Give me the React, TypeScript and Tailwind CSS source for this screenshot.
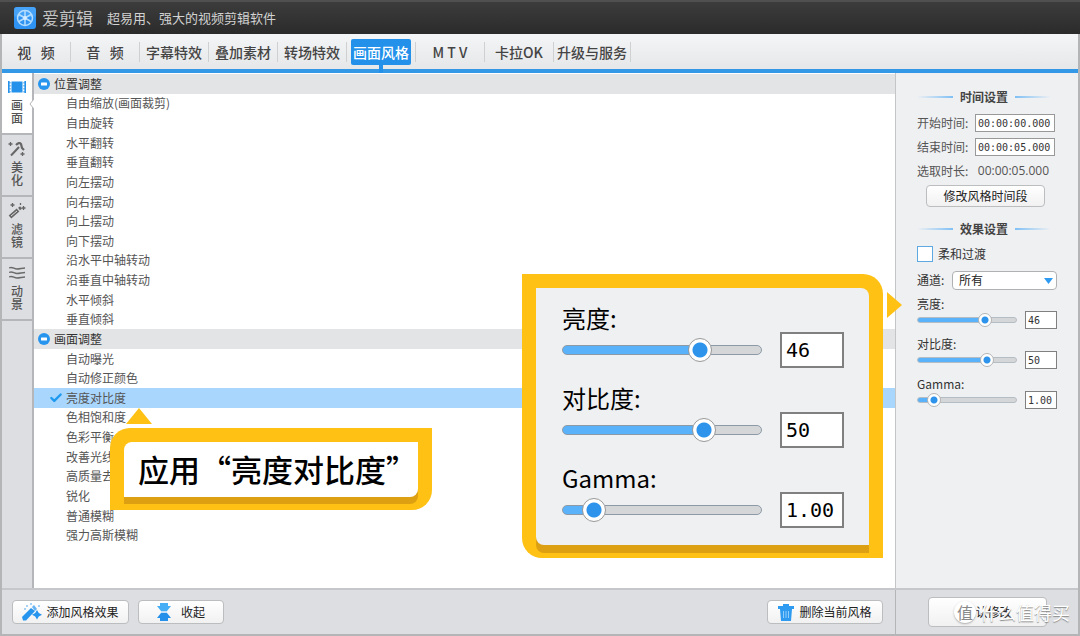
import { useState, type ReactNode } from 'react';
import clsx from 'clsx';
import { Check } from 'lucide-react';

const tabs = ['视   频', '音   频', '字幕特效', '叠加素材', '转场特效', '画面风格', 'M T V', '卡拉OK', '升级与服务'];

const groups = [
  {
    title: '位置调整',
    items: [
      '自由缩放(画面裁剪)', '自由旋转', '水平翻转', '垂直翻转', '向左摆动', '向右摆动',
      '向上摆动', '向下摆动', '沿水平中轴转动', '沿垂直中轴转动', '水平倾斜', '垂直倾斜',
    ],
  },
  {
    title: '画面调整',
    items: [
      '自动曝光', '自动修正颜色', '亮度对比度', '色相饱和度', '色彩平衡', '改善光线',
      '高质量去噪', '锐化', '普通模糊', '强力高斯模糊',
    ],
  },
];

const sliders = [
  { label: '亮度:', position: 72, value: '46' },
  { label: '对比度:', position: 74, value: '50' },
  { label: 'Gamma:', position: 11, value: '1.00' },
];

function FilmIcon() {
  return (
    <svg width="18" height="14" viewBox="0 0 18 14" fill="#2492ea" aria-hidden="true">
      <rect x="3.5" y="1.5" width="11" height="11" />
      <path d="M0 1h1.6v12H0zM16.4 1H18v12h-1.6z" />
      <path d="M1 2h2v1.5H1zM1 5h2v1.5H1zM1 8h2v1.5H1zM1 11h2v1.5H1zM15 2h2v1.5h-2zM15 5h2v1.5h-2zM15 8h2v1.5h-2zM15 11h2v1.5h-2z" opacity=".5" />
    </svg>
  );
}

function BeautyIcon() {
  return (
    <svg width="18" height="16" viewBox="0 0 18 16" fill="none" stroke="#666" aria-hidden="true">
      <path d="M3 14.5 11 6" strokeWidth="2" />
      <path d="M8 4c2-2 4-2.500 5-1l1 4 2 2" strokeWidth="2.200" />
      <path d="M2.500 1v4M.5 3h4M14.500 11v4M12.500 13h4" strokeWidth="1.300" />
    </svg>
  );
}

function FilterIcon() {
  return (
    <svg width="18" height="16" viewBox="0 0 18 16" fill="none" stroke="#666" aria-hidden="true">
      <path d="m2 14 8-7" strokeWidth="4" />
      <path d="m3 13 6-5" stroke="#ddd" strokeWidth="1" />
      <path d="m11 6 2-1.500" strokeWidth="3" />
      <path d="M4.500 0v4M2.500 2h4M15.500 3v4M13.500 5h4M12.500 0v2" strokeWidth="1.300" />
    </svg>
  );
}

function WavesIcon() {
  return (
    <svg width="16" height="14" viewBox="0 0 16 14" fill="none" stroke="#6b6b6b" strokeWidth="1.500" aria-hidden="true">
      <path d="M0 2c3-2 5 1 8 1s5-1 8-1M0 6.500c3-2 5 1 8 1s5-1 8-1M0 11c3-2 5 1 8 1s5-1 8-1" />
    </svg>
  );
}

const sideTabs = [
  { label: '画面', icon: <FilmIcon /> },
  { label: '美化', icon: <BeautyIcon /> },
  { label: '滤镜', icon: <FilterIcon /> },
  { label: '动景', icon: <WavesIcon /> },
];

function Logo() {
  return (
    <svg width="22" height="22" viewBox="0 0 22 22" aria-hidden="true">
      <rect width="22" height="22" rx="3" fill="#2f93f3" />
      <rect width="22" height="10" rx="3" fill="#5db2fb" opacity=".5" />
      <circle cx="11" cy="11" r="7.500" fill="none" stroke="#b5ddff" strokeWidth="1.500" />
      <path d="M11 4v14M5 7.500l12 7M17 7.500l-12 7" stroke="#b5ddff" strokeWidth="1.500" />
      <circle cx="11" cy="11" r="2" fill="#d5ecff" />
    </svg>
  );
}

function WandIcon() {
  return (
    <svg width="20" height="18" viewBox="0 0 20 18" fill="#2795ee" aria-hidden="true">
      <path d="M0 14 9 5l4 3-9 9.500H1z" />
      <path d="m15 7 1.800 3 3.200 1.800-3.200 1.800-1.800 3-1.800-3-3.200-1.800 3.200-1.800z" />
      <path d="M10 4l2-2 3 4-2 2z" opacity=".7" />
      <path d="M4 2h2v2H4zM8 0h2v2H8zM2 5h2v2H2zM16 2h2v2h-2z" opacity=".4" />
    </svg>
  );
}

function CollapseIcon() {
  return (
    <svg width="14" height="18" viewBox="0 0 14 18" aria-hidden="true">
      <path d="M3 0h8v3h3l-4 5H4L0 3h3z" fill="#45aef5" />
      <path d="M3 18h8v-3h3l-4-5H4l-4 5h3z" fill="#2490ea" />
      <path d="M4 8.500h6v1H4z" fill="#8cc9f5" />
    </svg>
  );
}

function TrashIcon() {
  return (
    <svg width="16" height="17" viewBox="0 0 16 17" fill="#2f9bf0" aria-hidden="true">
      <path d="M5 0h6v2h5v3H0V2h5z" />
      <path d="M2 5h12l-1 12H3z" />
      <path d="M5.500 7v7M8 7v7M10.500 7v7" stroke="#8fcdfa" />
    </svg>
  );
}

type SliderFieldProps = {
  id: string;
  label: string;
  position: number;
  value: string;
  large?: boolean;
};

function SliderField({ id, label, position, value, large }: SliderFieldProps) {
  const [pos, setPos] = useState(position);
  const fill = { '--fill': `${pos}%` } as React.CSSProperties;

  return (
    <div className={clsx('flex flex-col', large ? 'h-20' : 'h-10')}>
      <label
        htmlFor={id}
        className={clsx(large ? 'h-7 text-2xl leading-7 text-black' : 'h-3 text-xs leading-3 text-[#333]')}
      >
        {label}
      </label>
      <div className={clsx('flex items-center', large ? 'h-9 gap-[18px]' : 'h-5 gap-2')}>
        <input
          id={id}
          type="range"
          value={pos}
          onChange={(e) => setPos(Number(e.target.value))}
          style={fill}
          className={clsx(
            'appearance-none bg-transparent',
            '[&::-webkit-slider-runnable-track]:rounded-full [&::-webkit-slider-runnable-track]:border',
            '[&::-webkit-slider-runnable-track]:bg-[linear-gradient(to_right,#5ab2fa_var(--fill),#d5d6d8_var(--fill))]',
            '[&::-webkit-slider-thumb]:appearance-none [&::-webkit-slider-thumb]:rounded-full [&::-webkit-slider-thumb]:border',
            large
              ? 'h-6 w-[200px] [&::-webkit-slider-runnable-track]:h-[10px] [&::-webkit-slider-runnable-track]:border-[#8d9aa6] [&::-webkit-slider-thumb]:-mt-2 [&::-webkit-slider-thumb]:size-6 [&::-webkit-slider-thumb]:border-[#999] [&::-webkit-slider-thumb]:bg-[radial-gradient(circle,#2e93ea_7px,#fff_8px)]'
              : 'h-[14px] w-[100px] [&::-webkit-slider-runnable-track]:h-[6px] [&::-webkit-slider-runnable-track]:border-[#b4bcc4] [&::-webkit-slider-thumb]:-mt-[5px] [&::-webkit-slider-thumb]:size-[14px] [&::-webkit-slider-thumb]:border-[#b5b5b5] [&::-webkit-slider-thumb]:bg-[radial-gradient(circle,#2e93ea_3px,#fff_4px)]'
          )}
        />
        <input
          type="text"
          aria-label={label}
          defaultValue={value}
          className={clsx(
            'border-[#808080] bg-white font-["DejaVu_Sans_Mono",monospace]',
            large ? 'h-9 w-16 border-2 px-1 text-xl text-black' : 'h-[18px] w-8 border px-[2px] text-[10px] text-[#333]'
          )}
        />
      </div>
    </div>
  );
}

function SectionTitle({ children }: { children: ReactNode }) {
  return (
    <div className="flex h-5 items-center justify-between pr-[6px]">
      <span className="h-[2px] w-9 bg-linear-to-r from-transparent to-[#7fc0f5]" />
      <h2 className="text-xs font-bold text-[#444]">{children}</h2>
      <span className="h-[2px] w-9 bg-linear-to-r from-[#7fc0f5] to-transparent" />
    </div>
  );
}

function TimeField({ id, label, value }: { id: string; label: string; value: string }) {
  return (
    <div className="flex h-6 items-center justify-between pr-[2px]">
      <label htmlFor={id}>{label}</label>
      <input
        id={id}
        defaultValue={value}
        className='h-[18px] w-20 border border-[#999] bg-white px-[2px] font-["DejaVu_Sans_Mono",monospace] text-[10px] text-[#333]'
      />
    </div>
  );
}

function PushButton({ children, className }: { children: ReactNode; className?: string }) {
  return (
    <button
      type="button"
      className={clsx(
        'flex items-center justify-center rounded-sm border border-[#bcbdbf] bg-linear-to-b from-white to-[#f1f1f2] text-xs text-[#222]',
        className
      )}
    >
      {children}
    </button>
  );
}

export default function App() {
  const [activeTab, setActiveTab] = useState('画面风格');
  const [activeSide, setActiveSide] = useState('画面');
  const [selected, setSelected] = useState('亮度对比度');

  return (
    <div className='flex min-h-screen flex-col border-x-2 border-b-2 border-[#b4b5b7] bg-[#dddee1] font-["Noto_Sans_CJK_SC",sans-serif]'>
      {/* Title bar */}
      <header className="-mx-[2px] flex h-[34px] items-center border-t-2 border-[#505050] bg-linear-to-b from-[#3c3c3c] to-[#2b2b2b] px-[14px]">
        <Logo />
        <h1 className="ml-[6px] text-[17px] leading-5 text-[#c4c4c4]">爱剪辑</h1>
        <p className="ml-[14px] text-[13px] text-[#d2d2d2]">超易用、强大的视频剪辑软件</p>
      </header>

      {/* Main tabs */}
      <nav className="flex h-[39px] items-center border-b-4 border-[#3398e6] bg-linear-to-b from-[#f4f5f7] to-[#e6e7e9]">
        {tabs.map((tab) => (
          <div key={tab} className="flex h-5 min-w-[69px] items-center justify-center border-r border-[#cfd0d2] px-px">
            <button
              type="button"
              onClick={() => setActiveTab(tab)}
              className={clsx(
                'relative h-[26px] rounded-xs px-[2px] text-sm font-medium whitespace-pre',
                tab === activeTab ? 'bg-[#2390ea] text-white' : 'text-[#444]'
              )}
            >
              {tab}
              {tab === activeTab && <span className="absolute top-full left-1/2 h-2 w-1 -translate-x-1/2 bg-[#2390ea]" />}
            </button>
          </div>
        ))}
      </nav>

      <div className="flex flex-1">
        {/* Side tabs */}
        <aside className="flex w-8 flex-col border-r-2 border-[#b5b6b9] bg-[#dddee2]">
          {sideTabs.map(({ label, icon }) => (
            <button
              key={label}
              type="button"
              onClick={() => setActiveSide(label)}
              className={clsx(
                'relative flex h-[62px] flex-col items-center gap-[3px] border-b-2 border-[#b5b6b9] pt-[6px] text-xs leading-[13px] font-medium text-[#555]',
                label === activeSide && 'bg-white'
              )}
            >
              <span className="flex h-4 items-center">{icon}</span>
              <span className="w-3">{label}</span>
              {label === activeSide && (
                <svg className="absolute top-[26px] -right-[2px]" width="5" height="10" viewBox="0 0 5 10" aria-hidden="true">
                  <path d="M5 0 1 5l4 5" fill="#fff" stroke="#b5b6b9" />
                </svg>
              )}
            </button>
          ))}
        </aside>

        {/* Effect list */}
        <main className="relative flex flex-1 flex-col bg-white pt-px pb-[43px]">
          <div className="grid flex-1 auto-rows-fr text-xs text-[#555]">
            {groups.map(({ title, items }) => [
              <h2 key={title} className="flex items-center gap-1 bg-[#e3e4e6] pl-1 text-[#333]">
                <svg width="12" height="12" viewBox="0 0 12 12" aria-hidden="true">
                  <circle cx="6" cy="6" r="6" fill="#2795ee" />
                  <rect x="3" y="4.500" width="6" height="3" rx=".5" fill="#fff" />
                </svg>
                {title}
              </h2>,
              ...items.map((item) => (
                <button
                  key={item}
                  type="button"
                  onClick={() => setSelected(item)}
                  className={clsx('flex items-center gap-[3px] pl-[15px] text-left', item === selected && 'bg-[#a9d6fd]')}
                >
                  <Check
                    className={clsx('size-[14px] text-[#1d9af0]', item !== selected && 'invisible')}
                    strokeWidth={4}
                  />
                  {item}
                </button>
              )),
            ])}
          </div>

          {/* Callout for the selected effect */}
          <div className="absolute top-[355px] left-[76px] rounded-tl-[20px] rounded-br-[20px] bg-[#ffc114] px-[14px] pt-[14px] pb-[13px]">
            <svg className="absolute -top-5 left-4" width="26" height="16" viewBox="0 0 26 16" aria-hidden="true">
              <path d="M13 0 26 16H0z" fill="#ffc114" />
            </svg>
            <p className="flex h-[55px] items-center rounded-tl-lg rounded-br-lg bg-white pr-px pl-[14px] text-[31px] font-medium whitespace-nowrap text-black shadow-[0_7px_0_#dda012]">
              应用“亮度对比度”
            </p>
          </div>

          {/* Enlarged sliders */}
          <div className="absolute top-[201px] right-[12px] z-10 rounded-tr-[20px] rounded-bl-[20px] bg-[#ffc114] px-[14px] pt-[14px] pb-[13px]">
            <svg className="absolute top-[18px] left-full ml-1" width="15" height="26" viewBox="0 0 15 26" aria-hidden="true">
              <path d="M0 0 15 13 0 26z" fill="#ffc114" />
            </svg>
            <div className="rounded-tr-lg rounded-bl-lg bg-[#eff0f2] pt-4 pr-[25px] pb-px pl-[26px] shadow-[0_8px_0_#dda012]">
              {sliders.map((s) => (
                <SliderField key={s.label} id={`large-${s.label}`} large {...s} />
              ))}
            </div>
          </div>
        </main>

        {/* Settings */}
        <section className="flex w-[183px] flex-col border-l border-[#c4c5c7] bg-[#eff0f2] pt-[14px] pr-[21px] pl-[21px] text-xs text-[#555]">
          <SectionTitle>时间设置</SectionTitle>
          <div className="mt-1">
            <TimeField id="start" label="开始时间:" value="00:00:00.000" />
            <TimeField id="end" label="结束时间:" value="00:00:05.000" />
            <div className="flex h-6 items-center justify-between pr-2">
              <span>选取时长:</span>
              <span className='font-["Open_Sans",sans-serif]'>00:00:05.000</span>
            </div>
          </div>
          <PushButton className="mt-[2px] mr-3 ml-[9px] h-[22px]">修改风格时间段</PushButton>

          <div className="mt-[12px]">
            <SectionTitle>效果设置</SectionTitle>
          </div>
          <label className="mt-[5px] flex h-5 items-center gap-[5px] text-[#333]">
            <input type="checkbox" className="size-4 appearance-none border border-[#5fa9e3] bg-white" />
            柔和过渡
          </label>
          <div className="mt-[6px] flex h-5 items-center justify-between text-[#333]">
            <label htmlFor="channel">通道:</label>
            <div className="relative">
              <select
                id="channel"
                className="h-[19px] w-[105px] appearance-none rounded-sm border border-[#b0b1b3] bg-white pl-[6px] text-xs leading-4 text-[#222]"
              >
                <option>所有</option>
              </select>
              <svg className="pointer-events-none absolute top-[7px] right-1" width="9" height="6" viewBox="0 0 9 6" aria-hidden="true">
                <path d="M0 0h9L4.500 6z" fill="#2f9bf0" />
              </svg>
            </div>
          </div>
          <div className="mt-2">
            {sliders.map((s) => (
              <SliderField key={s.label} id={`small-${s.label}`} {...s} />
            ))}
          </div>
        </section>
      </div>

      {/* Bottom bar */}
      <footer className="flex h-[46px] items-center border-t-2 border-[#c6c7ca]">
        <PushButton className="ml-[10px] h-6 w-[117px] gap-1">
          <WandIcon />
          添加风格效果
        </PushButton>
        <PushButton className="ml-[9px] h-6 w-[86px] gap-[10px]">
          <CollapseIcon />
          收起
        </PushButton>
        <PushButton className="ml-auto h-6 w-[116px] gap-[5px]">
          <TrashIcon />
          删除当前风格
        </PushButton>
        <div className="relative ml-3 flex h-full w-[183px] items-center border-l border-[#b4b5b7] pl-8">
          <PushButton className="h-[30px] w-[119px]">确认修改</PushButton>
          <div className="absolute right-2 flex items-center gap-1 text-lg leading-6 whitespace-nowrap text-white [text-shadow:0_1px_1px_#888]">
            <span className="flex size-[22px] items-center justify-center rounded-full bg-white text-base leading-5 text-[#888] shadow-[0_1px_2px_#aaa] [text-shadow:none]">
              值
            </span>
            什么值得买
          </div>
        </div>
      </footer>
    </div>
  );
}
